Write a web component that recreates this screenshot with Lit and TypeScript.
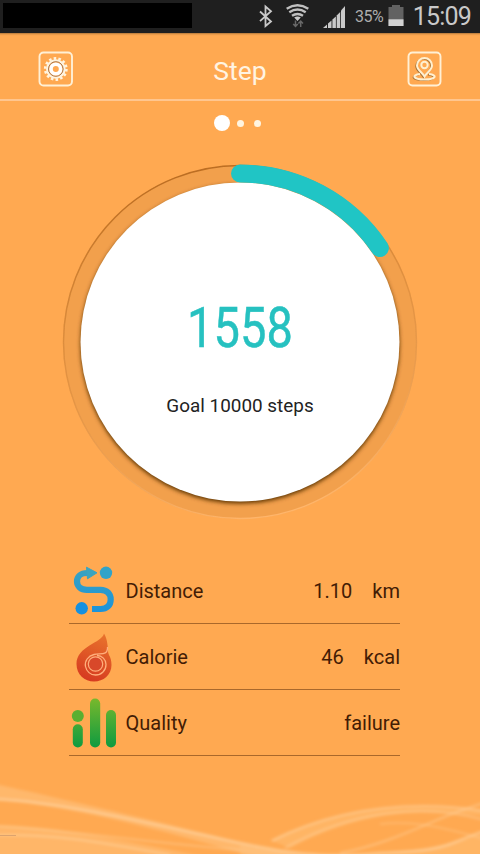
import { LitElement, html, css, svg, TemplateResult } from "lit";
import { customElement, property } from "lit/decorators.js";

@customElement("status-bar")
export class StatusBar extends LitElement {
  @property({ type: String }) time = "15:09";
  @property({ type: Number }) battery = 35;

  static styles = css`
    :host {
      display: flex;
      align-items: center;
      box-sizing: border-box;
      height: 33px;
      padding: 0 9px 0 3px;
      background: #1f1f1f;
      color: #c9c9c9;
      font-family: Roboto, sans-serif;
    }
    .notifications {
      width: 189px;
      height: 25px;
      margin-bottom: 3px;
      background: #000;
    }
    .icons {
      width: 94px;
      height: 33px;
      margin-left: 62px;
    }
    .percent {
      width: 30px;
      margin-left: 7px;
      font-size: 16px;
      letter-spacing: -0.5px;
      white-space: nowrap;
      color: #adadad;
    }
    .battery {
      width: 16px;
      height: 33px;
      margin-left: 3px;
    }
    .time {
      margin-left: auto;
      font-size: 25px;
      letter-spacing: -0.8px;
      line-height: 33px;
    }
  `;

  render() {
    return html`
      <div class="notifications"></div>
      <svg class="icons" viewBox="254 0 94 33">
        <path
          d="M260 11.500l11 10-5.500 4.500V6.500l5.500 4.700-11 10"
          fill="none"
          stroke="#c9c9c9"
          stroke-width="1.800"
        />
        <g fill="none" stroke="#c0c0c0" stroke-width="2.500">
          <path d="M286.700 8.700Q297.500 2 308.300 8.700" />
          <path d="M289.300 12.200Q297.500 7 305.700 12.200" />
          <path d="M292 15.700Q297.500 12.200 303 15.700" />
        </g>
        <path d="M294.200 17.500q3.300-2 6.600 0l-3.300 3.400z" fill="#c9c9c9" />
        <path
          d="M295.500 20.500v6m-2.300-2.400l2.300 2.400 2.300-2.400M300.700 27v-6m-2.300 2.400l2.300-2.400 2.300 2.400"
          fill="none"
          stroke="#686868"
          stroke-width="1.500"
        />
        <g fill="#c9c9c9">
          <path d="M323 28l4-3.500V28z" />
          <path d="M328 23.400l3.500-3V28H328z" />
          <path d="M332.400 19.500l3.500-3V28h-3.500z" />
          <path d="M336.700 15.400l3.500-3.300V28h-3.500z" />
          <path d="M341 10.500l4-4.500v22h-4z" />
        </g>
      </svg>
      <span class="percent">${this.battery}%</span>
      <svg class="battery" viewBox="0 0 16 33">
        <path d="M4 5h8v2h3.500v19H.5V7H4z" fill="#626262" />
        <path d="M.5 19.300h15V26H.5z" fill="#d2d2d2" />
      </svg>
      <span class="time">${this.time}</span>
    `;
  }
}

@customElement("step-dial")
export class StepDial extends LitElement {
  @property({ type: Number }) steps = 0;
  @property({ type: Number }) goal = 10000;

  static styles = css`
    :host {
      display: grid;
      width: 360px;
      height: 360px;
      font-family: Roboto, sans-serif;
    }
    .ring,
    .content {
      grid-area: 1 / 1;
    }
    .ring {
      width: 360px;
      height: 360px;
    }
    .content {
      z-index: 1;
      display: flex;
      flex-direction: column;
      align-items: center;
      padding-top: 133px;
    }
    .steps {
      font-size: 56px;
      line-height: 66px;
      color: #26c1c0;
      -webkit-text-stroke: 0.5px #26c1c0;
      transform: scaleX(0.84);
    }
    .goal {
      margin-top: 33px;
      font-size: 18.900px;
      line-height: 24px;
      color: #222;
    }
  `;

  render() {
    const radius = 168.5;
    const length = 2 * Math.PI * radius;
    const done = (this.steps / this.goal) * length;

    return html`
      <svg class="ring" viewBox="0 0 360 360">
        <defs>
          <linearGradient id="rim" x1="0.300" y1="0" x2="0.550" y2="1">
            <stop offset="0" stop-color="#b86a1e" />
            <stop offset="0.500" stop-color="#d88a3c" stop-opacity="0.600" />
            <stop offset="1" stop-color="#ffb56a" />
          </linearGradient>
          <filter id="soft" x="-10%" y="-10%" width="120%" height="120%">
            <feGaussianBlur stdDeviation="0.700" />
          </filter>
          <filter id="shadow" x="-10%" y="-10%" width="120%" height="120%">
            <feGaussianBlur stdDeviation="2.200" />
          </filter>
        </defs>
        <circle cx="180" cy="180" r="177" fill="#f2a04c" />
        <circle
          cx="180"
          cy="180"
          r="176.500"
          fill="none"
          stroke="url(#rim)"
          stroke-width="1.500"
          filter="url(#soft)"
        />
        <circle cx="180" cy="182" r="159.500" fill="#5f3606" filter="url(#shadow)" />
        <circle cx="180" cy="180" r="159.500" fill="#fff" />
        <circle
          cx="180"
          cy="180"
          r=${radius}
          fill="none"
          stroke="#20c5c5"
          stroke-width="18"
          stroke-linecap="round"
          stroke-dasharray="${done} ${length}"
          transform="rotate(-90 180 180)"
        />
      </svg>
      <div class="content">
        <div class="steps">${this.steps}</div>
        <div class="goal">Goal ${this.goal} steps</div>
      </div>
    `;
  }
}

interface Metric {
  icon: TemplateResult;
  label: string;
  value: string;
  unit?: string;
}

const distanceIcon = svg`
  <defs>
    <linearGradient id="blue" gradientUnits="userSpaceOnUse" x1="0" y1="8" x2="0" y2="56">
      <stop offset="0" stop-color="#3aa4c0" />
      <stop offset="1" stop-color="#1a92da" />
    </linearGradient>
  </defs>
  <path d="M20 15h-2c-6 0-10 3.500-10 8.300s3.500 8.500 10 8.500h13.500c6.500 0 10.200 4 10.200 9.600s-3.700 9.600-10.200 9.600H23"
    fill="none" stroke="url(#blue)" stroke-width="6.200" />
  <path d="M17.500 9.200L28 14.800l-9.500 6z" fill="#3aa4c0" stroke="#3aa4c0" stroke-linejoin="round" />
  <circle cx="37" cy="14.800" r="6.200" fill="#31a3c8" />
  <circle cx="12.700" cy="50.300" r="6.200" fill="#1590df" />
`;

const calorieIcon = svg`
  <defs>
    <linearGradient id="red" x1="0.700" y1="0" x2="0.400" y2="1">
      <stop offset="0" stop-color="#e8722c" />
      <stop offset="1" stop-color="#d63a20" />
    </linearGradient>
  </defs>
  <path d="M35 9.500C33 19 7.500 22 7.500 40c0 10.500 8 17.500 17.500 17.500S42.500 51 42.500 41c0-4.500-1-7.500-2.500-10-1.500-3-.8-6-1.500-10-.5-5-1.500-8-3.500-11.500z" fill="url(#red)" />
  <path d="M38.500 23c.5 9-7 6-13.500 7.500-6 1.500-9.500 6.500-8.500 12 1 5 5 8.500 10 8.500 6 0 10.500-4.500 10.500-10.500 0-5-4-9-9-9"
    fill="none" stroke="#ffae7c" stroke-width="1.300" />
  <circle cx="26.500" cy="40" r="7.200" fill="#d8482a" stroke="#ffae7c" stroke-width="1.200" />
`;

const qualityIcon = svg`
  <defs>
    <linearGradient id="green" gradientUnits="userSpaceOnUse" x1="0" y1="8" x2="0" y2="57">
      <stop offset="0" stop-color="#79b82c" />
      <stop offset="1" stop-color="#0f9b40" />
    </linearGradient>
  </defs>
  <circle cx="8.800" cy="26" r="6" fill="#5aaf31" />
  <g fill="url(#green)">
    <rect x="3.800" y="34.200" width="10" height="23.300" rx="5" />
    <rect x="21" y="8.500" width="10.200" height="49" rx="5.100" />
    <rect x="37" y="20" width="10" height="37.500" rx="5" />
  </g>
`;

@customElement("metric-row")
export class MetricRow extends LitElement {
  @property({ attribute: false }) metric!: Metric;

  static styles = css`
    :host {
      display: flex;
      align-items: center;
      box-sizing: border-box;
      height: 66px;
      border-bottom: 1px solid #a9682b;
      color: #431c05;
      font-family: Roboto, sans-serif;
      font-size: 20px;
    }
    .icon {
      width: 50px;
      height: 65px;
      margin-right: 6.500px;
    }
    .value {
      margin-left: auto;
    }
    .unit {
      margin-left: 20px;
    }
  `;

  render() {
    const { icon, label, value, unit } = this.metric;
    return html`
      <svg class="icon" viewBox="0 0 50 65">${icon}</svg>
      <span class="label">${label}</span>
      <span class="value">${value}</span>
      ${unit ? html`<span class="unit">${unit}</span>` : ""}
    `;
  }
}

@customElement("app-root")
export class AppRoot extends LitElement {
  metrics: Metric[] = [
    { icon: distanceIcon, label: "Distance", value: "1.10", unit: "km" },
    { icon: calorieIcon, label: "Calorie", value: "46", unit: "kcal" },
    { icon: qualityIcon, label: "Quality", value: "failure" },
  ];

  static styles = css`
    :host {
      display: flex;
      flex-direction: column;
      position: relative;
      height: 854px;
      overflow: hidden;
      background: #ffa951;
      font-family: Roboto, sans-serif;
    }
    .header {
      display: flex;
      align-items: center;
      justify-content: space-between;
      box-sizing: border-box;
      height: 68px;
      padding: 6px 38px 0;
      border-bottom: 2px solid #ffc68f;
      box-shadow: inset 0 3px 2px -2px #b0763a;
      color: #fff4e2;
    }
    .title {
      padding-top: 3px;
      font-size: 26.500px;
    }
    .button {
      width: 36px;
      height: 36px;
    }
    .pages {
      display: flex;
      align-items: center;
      gap: 7px;
      height: 44px;
      padding-left: 214px;
    }
    .dot {
      width: 7px;
      height: 7px;
      margin-right: 3px;
      border-radius: 50%;
      background: #fff4e0;
    }
    .dot.active {
      width: 16px;
      height: 16px;
      margin-right: 0;
      background: #fff;
    }
    .dial {
      margin: 17px auto 0 60px;
    }
    .metrics {
      margin: 36px 80px 0 69px;
    }
    .waves {
      position: absolute;
      left: 0;
      bottom: 0;
      width: 480px;
      height: 104px;
    }
  `;

  renderSettingsIcon() {
    return html`
      <svg class="button" viewBox="0 0 36 36">
        <rect x="1.500" y="1.500" width="32.500" height="33" rx="4" fill="none" stroke="#fff0d5" stroke-width="1.900" />
        <circle cx="17.800" cy="18" r="10.600" fill="none" stroke="#fff4df" stroke-width="2.600" stroke-dasharray="2.550 2.200" />
        <circle cx="17.800" cy="18" r="8.700" fill="none" stroke="#fff4df" stroke-width="2.200" />
        <circle cx="17.800" cy="18" r="7.300" fill="none" stroke="#a8784f" stroke-width="1" />
        <circle cx="17.800" cy="18" r="4.800" fill="none" stroke="#fff" stroke-width="3.600" />
      </svg>
    `;
  }

  renderMapIcon() {
    return html`
      <svg class="button" viewBox="0 0 36 36">
        <rect x="2.500" y="1.500" width="32" height="33" rx="4" fill="none" stroke="#fff0d5" stroke-width="1.900" />
        <g fill="none" stroke="#a37238" stroke-width="1.500" transform="translate(-1 .8)">
          <path d="M18.500 25.500c-3-5-7.500-6.500-7.500-11a7.500 7.500 0 0 1 15 0c0 4.500-4.500 6-7.500 11z" />
          <path d="M14 23c-9 1-7 5.500 4.500 5.500s13.500-4.500 4.500-5.500" />
        </g>
        <g fill="none" stroke="#fff0d0" stroke-width="2">
          <path d="M18.500 25.500c-3-5-7.500-6.500-7.500-11a7.500 7.500 0 0 1 15 0c0 4.500-4.500 6-7.500 11z" />
          <circle cx="18.500" cy="14" r="3.200" />
          <path d="M14 23c-9 1-7 5.500 4.500 5.500s13.500-4.500 4.500-5.500" />
        </g>
      </svg>
    `;
  }

  renderWaves() {
    return html`
      <svg class="waves" viewBox="0 0 480 104">
        <defs>
          <filter id="haze" x="-5%" y="-20%" width="110%" height="140%">
            <feGaussianBlur stdDeviation="1.500" />
          </filter>
        </defs>
        <g filter="url(#haze)">
          <g fill="#ffd6a0">
            <path d="M-5 34C60 48 160 72 240 92L310 108H260C180 86 80 56-5 50z" opacity=".33" />
            <path d="M-5 75C60 76 130 92 210 108H-5z" opacity=".28" />
            <path d="M270 90C320 65 370 58 410 57S460 60 485 60V66C430 60 370 56 290 98z" opacity=".25" />
            <path d="M240 95C300 108 400 112 485 83V108H240z" opacity=".25" />
          </g>
          <g fill="none" stroke="#ffdcae">
            <path d="M-5 49C70 53 150 74 240 93S350 104 400 102 450 92 485 81" stroke-width="2.500" opacity=".55" />
            <path d="M-5 85C50 84 90 90 170 105" stroke-width="2" opacity=".5" />
            <path d="M-5 76C70 80 150 93 240 100" stroke-width="1.500" opacity=".45" />
            <path d="M272 91C330 62 400 48 485 61" stroke-width="2" opacity=".5" />
            <path d="M285 98C350 62 420 52 485 70" stroke-width="2" opacity=".4" />
            <path d="M340 103C400 92 440 64 485 53" stroke-width="2" opacity=".4" />
            <path d="M380 74C420 70 450 80 485 89" stroke-width="1.500" opacity=".35" />
          </g>
        </g>
        <path d="M0 85.500h16" stroke="#c59168" opacity=".6" />
      </svg>
    `;
  }

  render() {
    return html`
      ${this.renderWaves()}
      <status-bar></status-bar>
      <div class="header">
        ${this.renderSettingsIcon()}
        <span class="title">Step</span>
        ${this.renderMapIcon()}
      </div>
      <div class="pages">
        <span class="dot active"></span>
        <span class="dot"></span>
        <span class="dot"></span>
      </div>
      <step-dial class="dial" .steps=${1558} .goal=${10000}></step-dial>
      <div class="metrics">
        ${this.metrics.map((m) => html`<metric-row .metric=${m}></metric-row>`)}
      </div>
    `;
  }
}
